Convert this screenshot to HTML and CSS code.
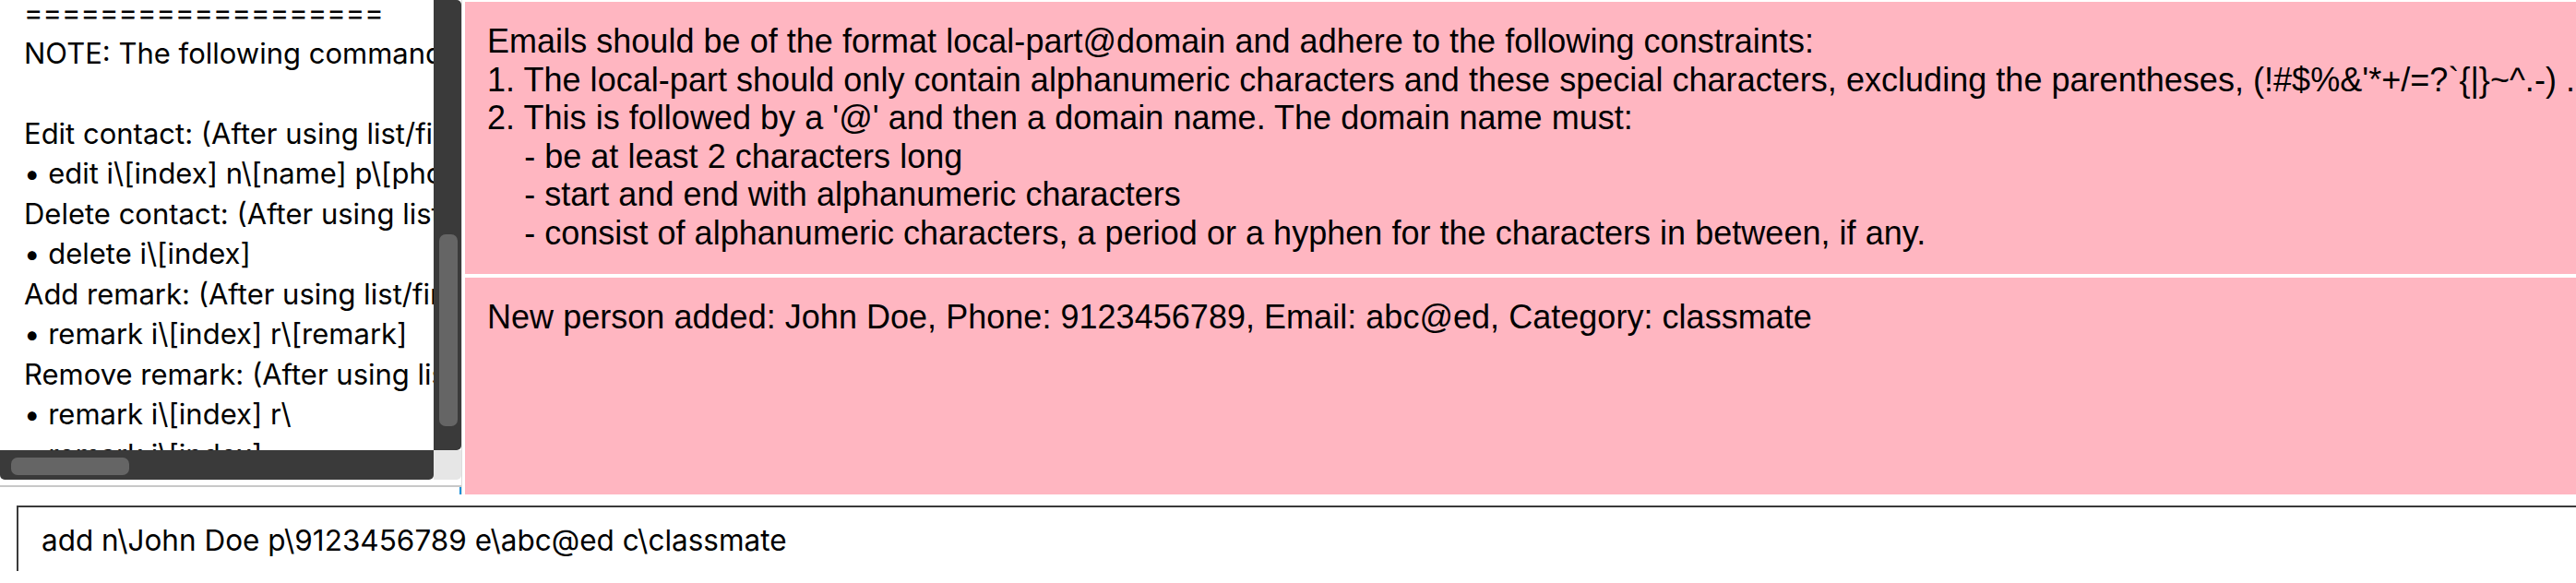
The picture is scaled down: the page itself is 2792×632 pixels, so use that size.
FILE: index.html
```html
<!DOCTYPE html>
<html>
<head>
<meta charset="utf-8">
<link rel="stylesheet" href="styles.css">
</head>
<body>
<div class="app">
  <div class="top">
    <section class="help">
      <div class="pane">
        <div class="viewport">
          <div class="help-text">
            <div class="line">===================</div>
            <div class="line">NOTE: The following commands require a displayed list</div>
            <div class="line">&nbsp;</div>
            <div class="line">Edit contact: (After using list/find)</div>
            <div class="line">• edit i\[index] n\[name] p\[phone] e\[email] c\[category]</div>
            <div class="line">Delete contact: (After using list/find)</div>
            <div class="line">• delete i\[index]</div>
            <div class="line">Add remark: (After using list/find)</div>
            <div class="line">• remark i\[index] r\[remark]</div>
            <div class="line">Remove remark: (After using list/find)</div>
            <div class="line">• remark i\[index] r\</div>
            <div class="line">• remark i\[index]</div>
          </div>
        </div>
        <div class="vbar"><div class="vthumb"></div></div>
        <div class="hbar"><div class="hthumb"></div></div>
        <div class="corner"></div>
      </div>
      <div class="help-rule"></div>
      <div class="help-foot"></div>
    </section>
    <div class="results">
      <div class="result-box result-error">Emails should be of the format local-part@domain and adhere to the following constraints:
1. The local-part should only contain alphanumeric characters and these special characters, excluding the parentheses, (!#$%&amp;'*+/=?`{|}~^.-) .
2. This is followed by a '@' and then a domain name. The domain name must:
    - be at least 2 characters long
    - start and end with alphanumeric characters
    - consist of alphanumeric characters, a period or a hyphen for the characters in between, if any.</div>
      <div class="result-box result-feedback">New person added: John Doe, Phone: 9123456789, Email: abc@ed, Category: classmate</div>
    </div>
  </div>
  <div class="command"><span class="command-text">add n\John Doe p\9123456789 e\abc@ed c\classmate</span></div>
</div>
</body>
</html>
```
FILE: styles.css
```css
html, body {
  margin: 0;
  padding: 0;
  background: #ffffff;
}
body {
  width: 2792px;
  height: 632px;
  overflow: hidden;
}
.top {
  display: flex;
  height: 536px;
}
.help {
  width: 500px;
  display: flex;
  flex-direction: column;
}
.pane {
  display: grid;
  grid-template-columns: 470px 30px;
  grid-template-rows: 488px 32px;
  height: 520px;
}
.viewport {
  overflow: hidden;
  background: #ffffff;
}
.help-text {
  margin-top: -8px;
  padding-left: 26px;
  font-family: Inter, "Noto Sans", sans-serif;
  font-size: 31px;
  color: #000;
  white-space: nowrap;
}
.line {
  height: 43.5px;
  line-height: 43.5px;
  white-space: nowrap;
}
.vbar {
  background: #3a3a3a;
  border-radius: 0 5px 5px 0;
  padding: 254px 4px 0 6px;
}
.vthumb {
  height: 208px;
  background: #656565;
  border-radius: 7px;
}
.hbar {
  background: #3a3a3a;
  border-radius: 0 0 5px 5px;
  padding: 8px 0 0 12px;
}
.hthumb {
  width: 128px;
  height: 19px;
  background: #656565;
  border-radius: 7px;
}
.corner {
  background: #e6e6e6;
  border-radius: 0 0 5px 0;
}
.help-rule {
  margin-top: 6px;
  height: 2px;
  background: #c8c8c8;
}
.help-foot {
  flex: 1;
  border-right: 2px solid #1a8fd8;
}
.results {
  flex: 1;
  border-left: 1px solid #dcdcdc;
  padding-left: 3px;
  padding-top: 2px;
  display: flex;
  flex-direction: column;
  gap: 4px;
  min-width: 0;
}
.result-box {
  background: #ffb6c1;
  padding: 22px 24px;
  font-family: "Liberation Sans", Arial, sans-serif;
  font-size: 36px;
  letter-spacing: 0.03px;
  line-height: 41.6px;
  color: #000;
  white-space: pre;
  overflow: hidden;
}
.result-error {
  height: 251px;
  flex: none;
}
.result-feedback {
  flex: 1;
}
.command {
  margin: 12px 0 0 18px;
  border-top: 2px solid #3a3a3a;
  border-left: 2px solid #3a3a3a;
  padding: 17px 0 0 25px;
  box-sizing: border-box;
  height: 71px;
}
.command-text {
  font-family: Inter, "Noto Sans", sans-serif;
  font-size: 31.5px;
  line-height: 38px;
  color: #000;
  white-space: pre;
}
```
